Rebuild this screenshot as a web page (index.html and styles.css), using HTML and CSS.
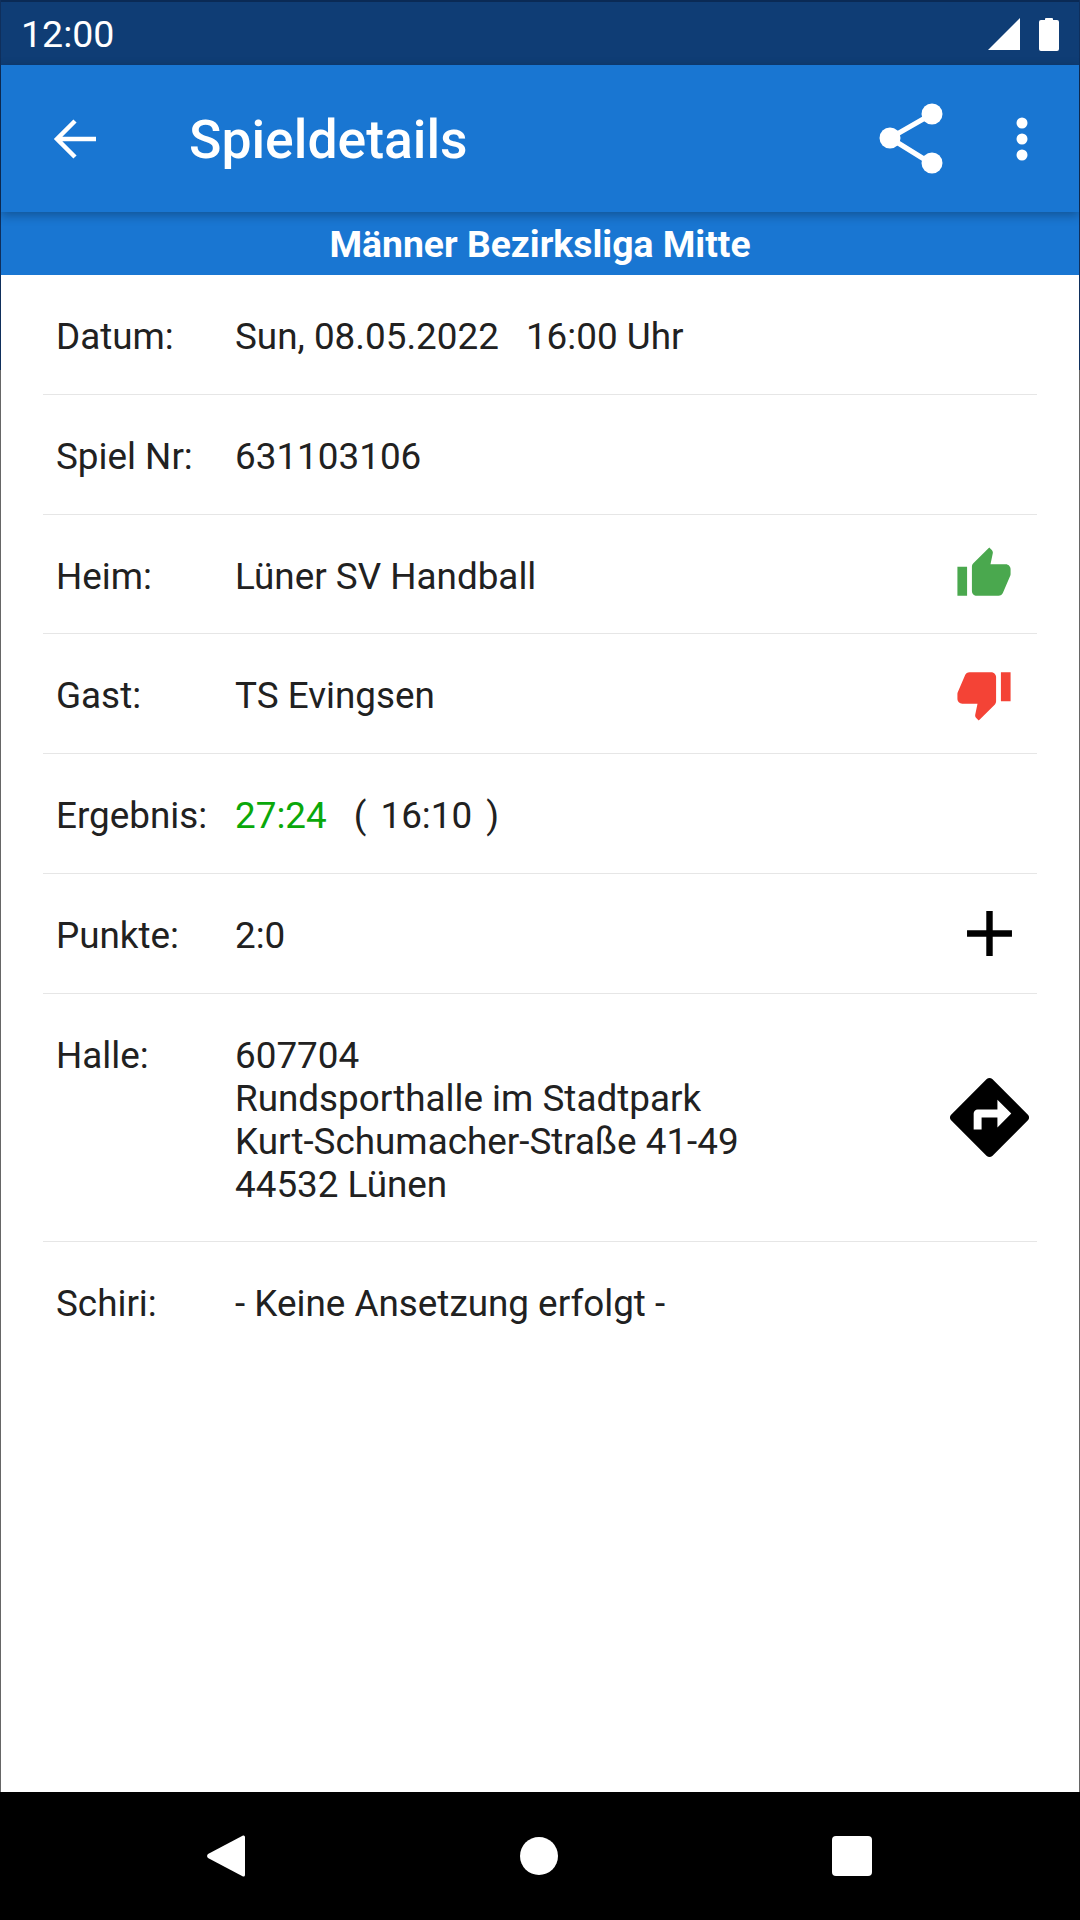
FILE: index.html
```html
<!DOCTYPE html>
<html lang="de">

<head>
    <meta charset="UTF-8">
    <meta name="viewport" content="width=device-width, initial-scale=1.0">
    <title>Spieldetails</title>
    <link rel="stylesheet" href="styles.css">
</head>

<body>
    <div class="screen">
        <div class="status-bar">
            <span class="clock">12:00</span>
            <div class="status-icons">
                <svg class="signal" width="32" height="32" viewBox="0 0 32 32"><path d="M32 0V32H0z" /></svg>
                <svg class="battery" width="20" height="34" viewBox="0 0 20 34"><path d="M6 2a1 1 0 0 1 1-1h6a1 1 0 0 1 1 1v1h4a2 2 0 0 1 2 2v27a2 2 0 0 1-2 2H2a2 2 0 0 1-2-2V5a2 2 0 0 1 2-2h4z" /></svg>
            </div>
        </div>

        <header class="app-bar">
            <svg class="back" width="44" height="42" viewBox="0 0 44 42"><path d="M43 21H4M22 3 4 21l18 18" /></svg>
            <h1 class="title">Spieldetails</h1>
            <svg class="share" width="66" height="72" viewBox="0 0 66 72">
                <path d="M53 11 11 35l42 26" />
                <circle cx="53" cy="11" r="10.5" />
                <circle cx="11" cy="35" r="10.5" />
                <circle cx="53" cy="60" r="10.5" />
            </svg>
            <svg class="more" width="12" height="44" viewBox="0 0 12 44">
                <circle cx="6" cy="6" r="5.5" />
                <circle cx="6" cy="22" r="5.5" />
                <circle cx="6" cy="38" r="5.5" />
            </svg>
        </header>

        <div class="league">Männer Bezirksliga Mitte</div>

        <main class="details">
            <div class="row">
                <div class="label">Datum:</div>
                <div class="value">Sun, 08.05.2022<span class="time">16:00 Uhr</span></div>
            </div>
            <div class="row">
                <div class="label">Spiel Nr:</div>
                <div class="value">631103106</div>
            </div>
            <div class="row">
                <div class="label">Heim:</div>
                <div class="value">Lüner SV Handball</div>
                <div class="row-icon">
                    <svg class="thumb thumb-up" width="58" height="58" viewBox="0 0 24 24"><path d="M1 21h4V9H1v12zm22-11c0-1.1-.9-2-2-2h-6.31l.95-4.57.03-.32c0-.41-.17-.79-.44-1.06L14.17 1 7.59 7.59C7.22 7.95 7 8.45 7 9v10c0 1.1.9 2 2 2h9c.83 0 1.54-.5 1.84-1.22l3.02-7.05c.09-.23.14-.47.14-.73v-2z" /></svg>
                </div>
            </div>
            <div class="row">
                <div class="label">Gast:</div>
                <div class="value">TS Evingsen</div>
                <div class="row-icon">
                    <svg class="thumb thumb-down" width="58" height="58" viewBox="0 0 24 24"><path d="M15 3H6c-.83 0-1.54.5-1.84 1.22l-3.02 7.05c-.09.23-.14.47-.14.73v2c0 1.1.9 2 2 2h6.31l-.95 4.57-.03.32c0 .41.17.79.44 1.06L9.83 23l6.59-6.59c.36-.36.58-.86.58-1.41V5c0-1.1-.9-2-2-2zm4 0v12h4V3h-4z" /></svg>
                </div>
            </div>
            <div class="row">
                <div class="label">Ergebnis:</div>
                <div class="value"><span class="score">27:24</span><span class="halftime">( 16:10 )</span></div>
            </div>
            <div class="row">
                <div class="label">Punkte:</div>
                <div class="value">2:0</div>
                <div class="row-icon">
                    <svg width="77" height="77" viewBox="0 0 24 24"><path d="M19 13h-6v6h-2v-6H5v-2h6V5h2v6h6v2z" /></svg>
                </div>
            </div>
            <div class="row">
                <div class="label">Halle:</div>
                <div class="value">607704<br>Rundsporthalle im Stadtpark<br>Kurt-Schumacher-Straße 41-49<br>44532 Lünen</div>
                <div class="row-icon">
                    <svg width="95" height="95" viewBox="0 0 24 24"><path d="M21.71 11.29l-9-9c-.39-.39-1.02-.39-1.41 0l-9 9c-.39.39-.39 1.02 0 1.41l9 9c.39.39 1.02.39 1.41 0l9-9c.39-.38.39-1.01 0-1.41zM14 14.5V12h-4v3H8v-4c0-.55.45-1 1-1h5V7.5l3.5 3.5-3.5 3.5z" /></svg>
                </div>
            </div>
            <div class="row">
                <div class="label">Schiri:</div>
                <div class="value">- Keine Ansetzung erfolgt -</div>
            </div>
        </main>

        <nav class="nav-bar">
            <svg width="38" height="44" viewBox="0 0 38 44"><path d="M36 1.5a1.6 1.6 0 0 1 2 1.5v38a1.6 1.6 0 0 1-2 1.5L1 24a2.6 2.6 0 0 1 0-4z" /></svg>
            <svg width="38" height="38" viewBox="0 0 38 38"><circle cx="19" cy="19" r="19" /></svg>
            <svg width="40" height="40" viewBox="0 0 40 40"><rect width="40" height="40" rx="4" /></svg>
        </nav>
    </div>
</body>

</html>
```

FILE: styles.css
```css
body {
    font-family: Roboto, sans-serif;
    margin: 0;
    padding: 0;
    background-color: white;
}

.screen {
    display: flex;
    flex-direction: column;
    height: 1920px;
    padding: 0 1px;
    box-sizing: border-box;
    background: linear-gradient(#0f2f5c 370px, #666 370px);
}

.status-bar {
    display: flex;
    justify-content: space-between;
    align-items: center;
    height: 65px;
    padding: 0 20px 0 20px;
    box-sizing: border-box;
    background-color: #0f3d75;
    border-top: 2px solid #0a2a55;
    color: white;
}

.clock {
    font-size: 37.5px;
}

.status-icons {
    display: flex;
    align-items: center;
    gap: 19px;
}

.status-icons svg {
    fill: white;
}

.app-bar {
    position: relative;
    z-index: 1;
    display: flex;
    align-items: center;
    height: 147px;
    padding: 0 51px 0 52px;
    box-sizing: border-box;
    background-color: #1976d2;
    box-shadow: 0 3px 10px rgba(0, 0, 0, 0.3);
}

.back {
    fill: none;
    stroke: white;
    stroke-width: 4.5;
}

.title {
    flex: 1;
    margin: 2px 0 0 92px;
    font-size: 53.5px;
    font-weight: 500;
    color: white;
}

.share {
    margin-right: 71px;
    fill: white;
}

.share path {
    fill: none;
    stroke: white;
    stroke-width: 5;
}

.more {
    fill: white;
}

.league {
    height: 63px;
    line-height: 65px;
    text-align: center;
    font-size: 37.3px;
    font-weight: 700;
    color: white;
    background-color: #1976d2;
}

.details {
    flex: 1;
    padding: 0 42px;
    background-color: white;
}

.row {
    display: flex;
    padding: 38px 0 37.75px;
    border-bottom: 1px solid #e6e6e6;
    font-size: 36.85px;
    line-height: 43px;
    color: #212121;
}

.row:last-child {
    border-bottom: none;
}

.label {
    width: 179px;
    margin: 0 0 -2px 13px;
    padding-top: 2px;
    flex-shrink: 0;
}

.value {
    flex: 1;
    margin-bottom: -2px;
    padding-top: 2px;
}

.time {
    margin-left: 27px;
}

.score {
    color: #0aa80a;
}

.halftime {
    margin-left: 27px;
    word-spacing: 5px;
}

.row-icon {
    display: flex;
    justify-content: center;
    align-items: center;
    width: 95px;
    height: 43px;
    align-self: center;
}

.thumb {
    margin-right: 11px;
}

.thumb-up {
    fill: #4aa84e;
}

.thumb-down {
    fill: #f44336;
}

.nav-bar {
    display: grid;
    grid-template-columns: repeat(3, 1fr);
    height: 128px;
    margin: 0 -1px;
    background-color: black;
    fill: white;
    align-items: center;
    justify-items: center;
    padding: 0 72px 0 69px;
}
```
